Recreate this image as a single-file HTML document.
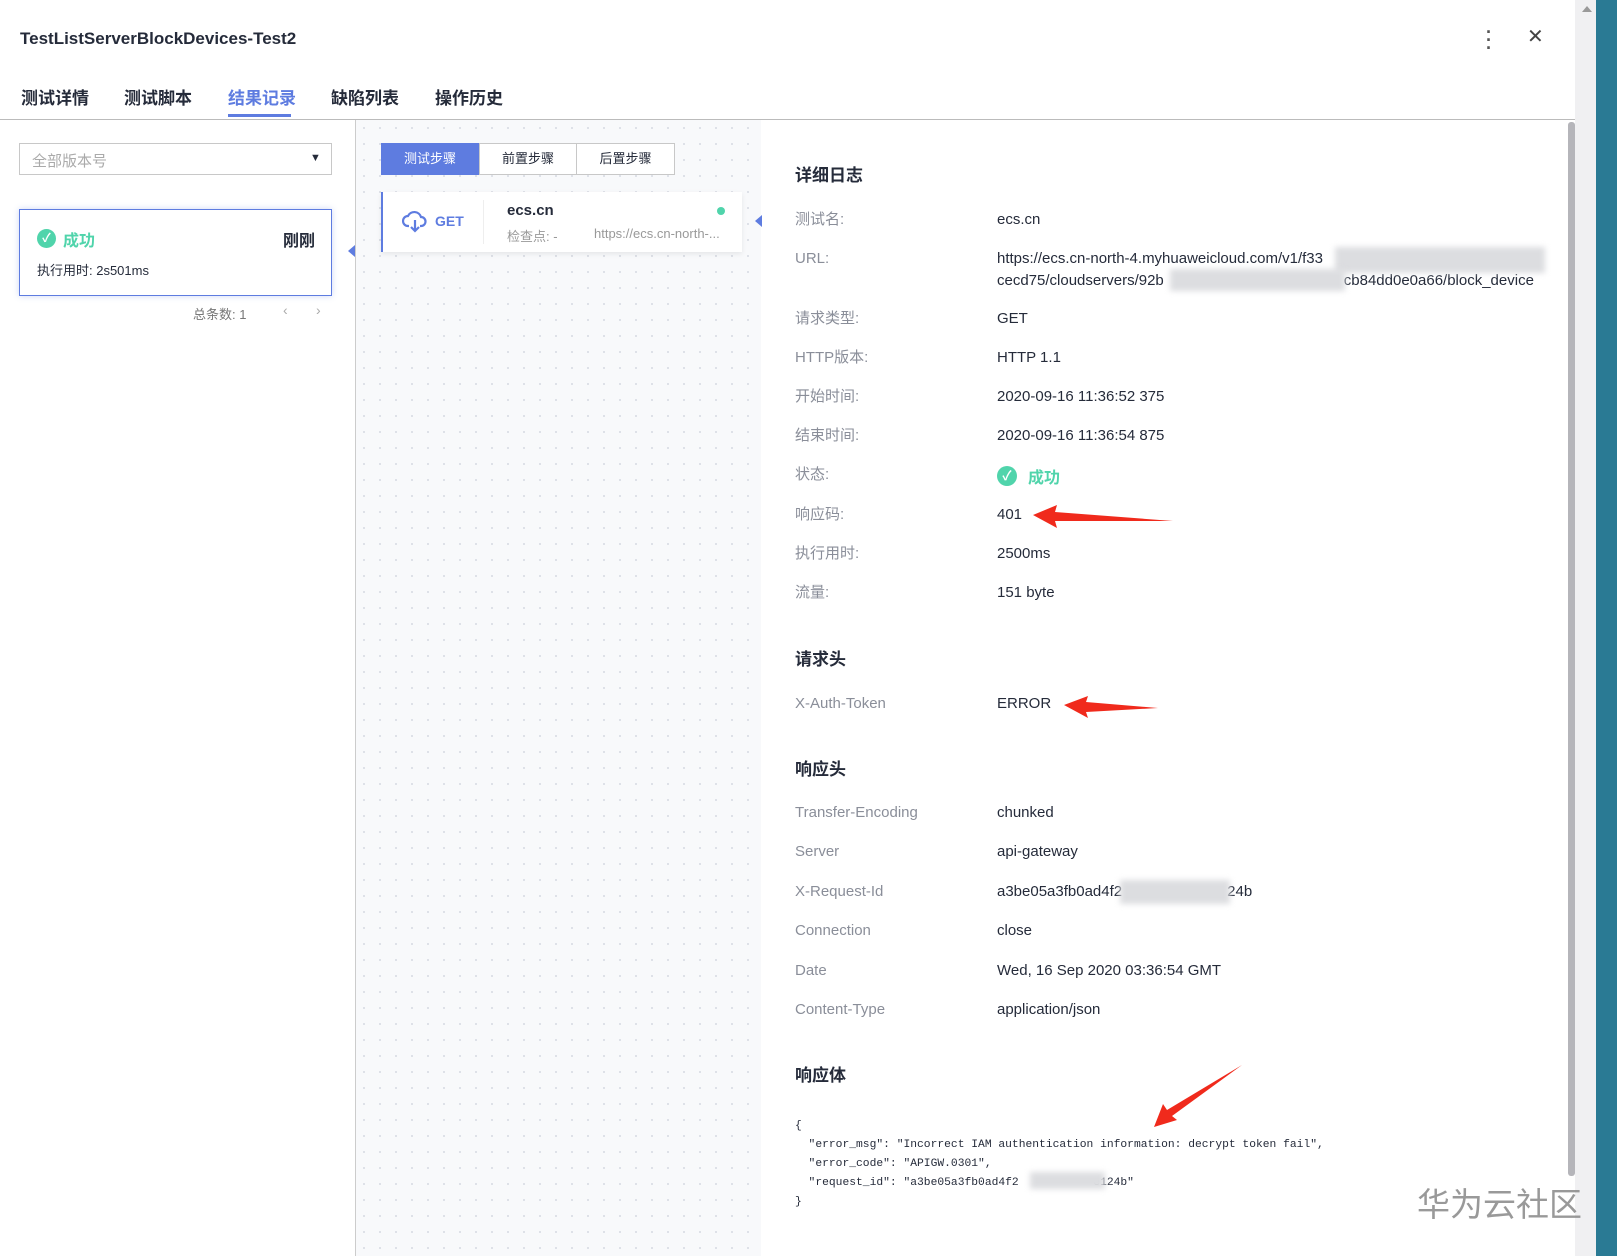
<!DOCTYPE html>
<html><head><meta charset="utf-8"><style>
*{margin:0;padding:0;box-sizing:border-box}
body{width:1617px;height:1256px;overflow:hidden;background:#fff;font-family:"Liberation Sans","Noto Sans CJK SC",sans-serif;color:#252b3a;position:relative}
.a{position:absolute;white-space:nowrap}
.lbl{position:absolute;left:795px;font-size:15px;color:#8a8e99;white-space:nowrap;line-height:20px}
.val{position:absolute;left:997px;font-size:15px;color:#252b3a;white-space:nowrap;line-height:20px}
.h{position:absolute;left:795px;font-size:17px;font-weight:bold;color:#252b3a;margin-top:-3px}
.blur{position:absolute;background:#dcdde0;filter:blur(3px)}
</style></head><body>
<div class="a" style="left:20px;top:29px;font-size:17px;font-weight:bold">TestListServerBlockDevices-Test2</div>
<div class="a" style="left:1486px;top:28px;font-size:18px;color:#555;line-height:8px;font-weight:bold">·<br>·<br>·</div>
<div class="a" style="left:1527px;top:24px;font-size:20px;color:#444">✕</div>
<div class="a" style="left:21px;top:84px;font-size:17px;font-weight:bold">测试详情</div>
<div class="a" style="left:124px;top:84px;font-size:17px;font-weight:bold">测试脚本</div>
<div class="a" style="left:228px;top:84px;font-size:17px;font-weight:bold;color:#5e7ce0">结果记录</div>
<div class="a" style="left:228px;top:114px;width:63px;height:3px;background:#5e7ce0"></div>
<div class="a" style="left:331px;top:84px;font-size:17px;font-weight:bold">缺陷列表</div>
<div class="a" style="left:435px;top:84px;font-size:17px;font-weight:bold">操作历史</div>
<div class="a" style="left:0;top:119px;width:1575px;height:1px;background:#bbb"></div>
<div class="a" style="left:1575px;top:0;width:21px;height:1256px;background:#f0f0f2"></div>
<div class="a" style="left:1596px;top:0;width:21px;height:1256px;background:#2a7a94"></div>
<div class="a" style="left:1582px;top:6px;width:0;height:0;border-left:5px solid transparent;border-right:5px solid transparent;border-bottom:6px solid #999"></div>
<div class="a" style="left:1568px;top:122px;width:7px;height:1054px;background:#b5b5ba;border-radius:3px"></div>
<div class="a" style="left:355px;top:120px;width:1px;height:1136px;background:#ccc"></div>
<div class="a" style="left:19px;top:143px;width:313px;height:32px;border:1px solid #c8c8c8;"></div>
<div class="a" style="left:32px;top:150px;font-size:15px;color:#aaa">全部版本号</div>
<div class="a" style="left:310px;top:152px;font-size:11px">▼</div>
<div class="a" style="left:19px;top:209px;width:313px;height:87px;border:1px solid #5e7ce0;box-shadow:0 0 6px rgba(94,124,224,.3)"></div>
<div class="a" style="left:37px;top:229px;width:19px;height:19px;border-radius:50%;background:#50d4ab;color:#fff;font-size:12px;text-align:center;line-height:19px;font-weight:bold">✓</div>
<div class="a" style="left:63px;top:227px;font-size:16px;color:#50d4ab;font-weight:bold">成功</div>
<div class="a" style="left:283px;top:227px;font-size:16px;font-weight:bold">刚刚</div>
<div class="a" style="left:37px;top:260px;font-size:13px">执行用时: 2s501ms</div>
<div class="a" style="left:348px;top:245px;width:0;height:0;border-top:6px solid transparent;border-bottom:6px solid transparent;border-right:7px solid #5e7ce0"></div>
<div class="a" style="left:193px;top:304px;font-size:13px;color:#777">总条数: 1</div>
<div class="a" style="left:283px;top:302px;font-size:14px;color:#aaa">‹</div>
<div class="a" style="left:316px;top:302px;font-size:14px;color:#aaa">›</div>
<div class="a" style="left:356px;top:120px;width:405px;height:1136px;background-color:#f8f9fb;background-image:radial-gradient(#dcdfe6 1px,transparent 1.2px);background-size:16px 16px"></div>
<div class="a" style="left:381px;top:143px;width:98px;height:32px;background:#5e7ce0;color:#fff;font-size:13px;text-align:center;line-height:32px">测试步骤</div>
<div class="a" style="left:479px;top:143px;width:98px;height:32px;background:#fff;border:1px solid #c8c8c8;font-size:13px;text-align:center;line-height:30px">前置步骤</div>
<div class="a" style="left:577px;top:143px;width:98px;height:32px;background:#fff;border:1px solid #c8c8c8;border-left:none;font-size:13px;text-align:center;line-height:30px">后置步骤</div>
<div class="a" style="left:381px;top:192px;width:361px;height:60px;background:#fff;border-left:2px solid #5e7ce0;box-shadow:0 2px 5px rgba(0,0,0,.08)"></div>
<svg class="a" style="left:402px;top:208px" width="26" height="26" viewBox="0 0 26 26" fill="none" stroke="#5e7ce0" stroke-width="2.2"><path d="M7 18H6a5 5 0 0 1 0-10 7 7 0 0 1 13 1 4.5 4.5 0 0 1 0 9h-1"/><path d="M13 12v11M9 19l4 4 4-4"/></svg>
<div class="a" style="left:435px;top:213px;font-size:14px;font-weight:bold;color:#5e7ce0">GET</div>
<div class="a" style="left:483px;top:200px;width:1px;height:44px;background:#eee"></div>
<div class="a" style="left:507px;top:202px;font-size:15px;font-weight:bold">ecs.cn</div>
<div class="a" style="left:717px;top:207px;width:8px;height:8px;border-radius:50%;background:#50d4ab"></div>
<div class="a" style="left:507px;top:226px;font-size:13px;color:#999">检查点: -</div>
<div class="a" style="left:594px;top:226px;font-size:13px;color:#999">https://ecs.cn-north-...</div>
<div class="a" style="left:755px;top:215px;width:0;height:0;border-top:6px solid transparent;border-bottom:6px solid transparent;border-right:7px solid #5e7ce0"></div>
<div class="h" style="top:164px">详细日志</div>
<div class="lbl" style="top:210px">测试名:</div><div class="val" style="top:210px">ecs.cn</div>
<div class="lbl" style="top:249px">URL:</div>
<div class="val" style="top:249px">https://ecs.cn-north-4.myhuaweicloud.com/v1/f33</div>
<div class="val" style="top:271px">cecd75/cloudservers/92b<span style="padding-left:180px">cb84dd0e0a66/block_device</span></div>
<div class="blur" style="left:1335px;top:247px;width:210px;height:26px"></div>
<div class="blur" style="left:1170px;top:269px;width:175px;height:22px"></div>
<div class="lbl" style="top:309px">请求类型:</div><div class="val" style="top:309px">GET</div>
<div class="lbl" style="top:348px">HTTP版本:</div><div class="val" style="top:348px">HTTP 1.1</div>
<div class="lbl" style="top:387px">开始时间:</div><div class="val" style="top:387px">2020-09-16 11:36:52 375</div>
<div class="lbl" style="top:426px">结束时间:</div><div class="val" style="top:426px">2020-09-16 11:36:54 875</div>
<div class="lbl" style="top:465px">状态:</div>
<div class="a" style="left:997px;top:466px;width:20px;height:20px;border-radius:50%;background:#50d4ab;color:#fff;font-size:13px;text-align:center;line-height:20px;font-weight:bold">✓</div>
<div class="a" style="left:1028px;top:464px;font-size:16px;color:#50d4ab;font-weight:bold">成功</div>
<div class="lbl" style="top:505px">响应码:</div><div class="val" style="top:505px">401</div>
<div class="lbl" style="top:544px">执行用时:</div><div class="val" style="top:544px">2500ms</div>
<div class="lbl" style="top:583px">流量:</div><div class="val" style="top:583px">151 byte</div>
<div class="h" style="top:648px">请求头</div>
<div class="lbl" style="top:694px">X-Auth-Token</div><div class="val" style="top:694px">ERROR</div>
<div class="h" style="top:758px">响应头</div>
<div class="lbl" style="top:803px">Transfer-Encoding</div><div class="val" style="top:803px">chunked</div>
<div class="lbl" style="top:842px">Server</div><div class="val" style="top:842px">api-gateway</div>
<div class="lbl" style="top:882px">X-Request-Id</div><div class="val" style="top:882px">a3be05a3fb0ad4f2<span style="padding-left:105px">24b</span></div>
<div class="blur" style="left:1120px;top:880px;width:110px;height:24px"></div>
<div class="lbl" style="top:921px">Connection</div><div class="val" style="top:921px">close</div>
<div class="lbl" style="top:961px">Date</div><div class="val" style="top:961px">Wed, 16 Sep 2020 03:36:54 GMT</div>
<div class="lbl" style="top:1000px">Content-Type</div><div class="val" style="top:1000px">application/json</div>
<div class="h" style="top:1064px">响应体</div>
<pre class="a" style="white-space:pre;left:795px;top:1117px;font-family:'Liberation Mono',monospace;font-size:11.3px;line-height:19px;color:#252b3a">{
  "error_msg": "Incorrect IAM authentication information: decrypt token fail",
  "error_code": "APIGW.0301",
  "request_id": "a3be05a3fb0ad4f2           e124b"
}</pre>
<div class="blur" style="left:1030px;top:1172px;width:75px;height:17px"></div>
<div class="a" style="left:1417px;top:1178px;font-size:33px;color:#888;opacity:.85">华为云社区</div>
<svg class="a" style="left:0;top:0" width="1617" height="1256"><g fill="#f02a1c">
<polygon points="1033,515 1057,505 1055,512 1173,521 1055,521 1057,528"/>
<polygon points="1064,705 1088,696 1086,702 1158,708 1086,712 1088,718"/>
<polygon points="1154,1127 1163,1104 1167,1110 1242,1065 1172,1116 1177,1120"/>
</g></svg>
</body></html>
